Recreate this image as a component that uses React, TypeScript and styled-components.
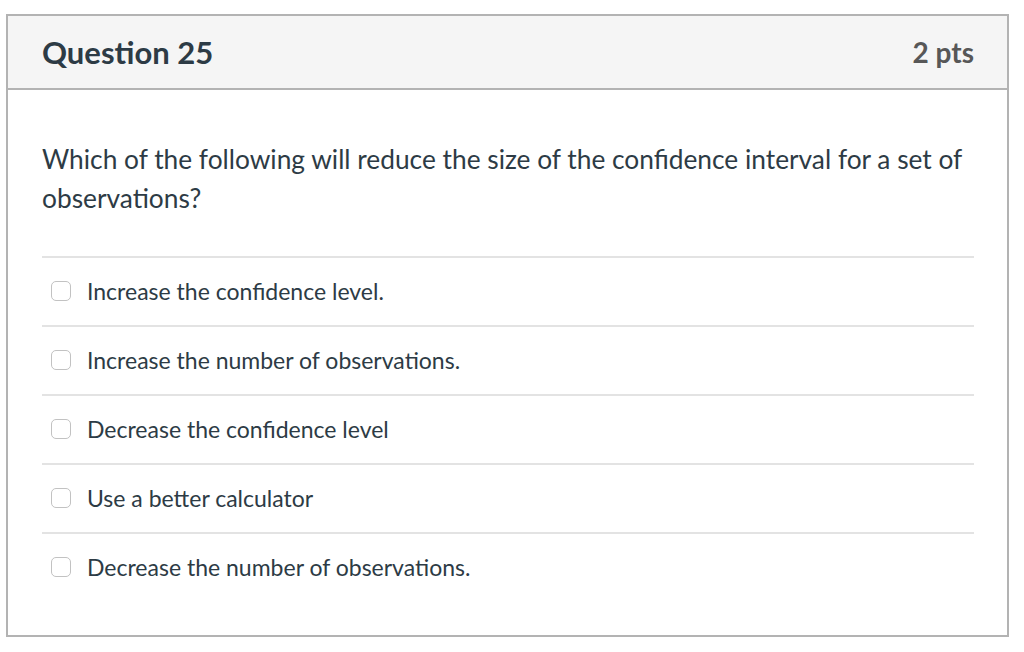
import React, { FC } from 'react';
import styled, { createGlobalStyle } from 'styled-components';

const GlobalStyle = createGlobalStyle`
  body {
    margin: 0;
    background: #ffffff;
    font-family: Lato, "Open Sans", sans-serif;
  }
`;

const Card = styled.div`
  margin: 14px 0 0 6px;
  width: 1003px;
  box-sizing: border-box;
  border: 2px solid #b3b3b3;
  background: #ffffff;
`;

const Header = styled.div`
  height: 74px;
  box-sizing: border-box;
  display: flex;
  align-items: center;
  justify-content: space-between;
  padding: 0 33px 0 34px;
  background: #f5f5f5;
  border-bottom: 2px solid #b3b3b3;
`;

const Title = styled.h2`
  margin: 0;
  font-size: 31px;
  font-weight: 700;
  color: #2d3b45;
`;

const Points = styled.span`
  font-size: 28px;
  font-weight: 700;
  color: #575757;
`;

const Body = styled.div`
  padding: 50px 33px 34px 34px;
`;

const QuestionText = styled.p`
  margin: 0 0 38px 0;
  font-size: 26.3px;
  line-height: 39px;
  color: #2d3b45;
`;

const Answers = styled.ul`
  list-style: none;
  margin: 0;
  padding: 0;
`;

const Answer = styled.li`
  display: flex;
  align-items: center;
  height: 69px;
  box-sizing: border-box;
  border-top: 2px solid #e3e3e3;
  padding-left: 9px;
  padding-bottom: 2px;
  gap: 16px;
`;

const Checkbox = styled.span`
  width: 20px;
  height: 20px;
  box-sizing: border-box;
  border: 1.5px solid #c2c2c2;
  border-radius: 5px;
  background: #ffffff;
  flex-shrink: 0;
`;

const AnswerText = styled.span`
  font-size: 23px;
  color: #2d3b45;
`;

const answers = [
  'Increase the confidence level.',
  'Increase the number of observations.',
  'Decrease the confidence level',
  'Use a better calculator',
  'Decrease the number of observations.',
];

const App: FC = () => (
  <>
    <GlobalStyle />
    <Card>
      <Header>
        <Title>Question 25</Title>
        <Points>2 pts</Points>
      </Header>
      <Body>
        <QuestionText>
          Which of the following will reduce the size of the confidence interval for a set of observations?
        </QuestionText>
        <Answers>
          {answers.map((text) => (
            <Answer key={text}>
              <Checkbox />
              <AnswerText>{text}</AnswerText>
            </Answer>
          ))}
        </Answers>
      </Body>
    </Card>
  </>
);

export default App;
